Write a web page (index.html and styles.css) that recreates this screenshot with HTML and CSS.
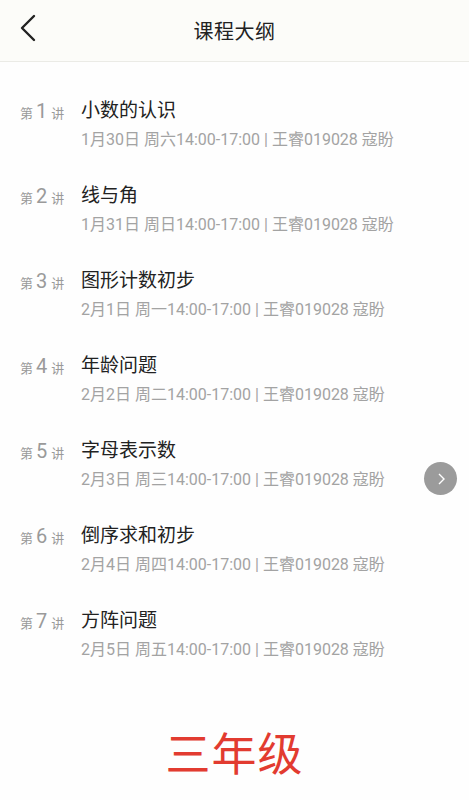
FILE: index.html
```html
<!DOCTYPE html>
<html lang="zh">
<head>
<meta charset="utf-8">
<link rel="stylesheet" href="styles.css">
</head>
<body>
<div class="page">
  <header class="header">
    <svg class="back" width="20" height="28" viewBox="0 0 20 28"><path d="M15 2 L3 14 L15 26" fill="none" stroke="#222" stroke-width="2.4" stroke-linecap="round" stroke-linejoin="round"/></svg>
    <div class="title">课程大纲</div>
  </header>
  <main class="list">
    <div class="item">
      <div class="num"><span class="s">第</span><span class="n">1</span><span class="s">讲</span></div>
      <div class="info"><div class="name">小数的认识</div><div class="meta">1月30日 周六14:00-17:00 | 王睿019028 寇盼</div></div>
    </div>
    <div class="item">
      <div class="num"><span class="s">第</span><span class="n">2</span><span class="s">讲</span></div>
      <div class="info"><div class="name">线与角</div><div class="meta">1月31日 周日14:00-17:00 | 王睿019028 寇盼</div></div>
    </div>
    <div class="item">
      <div class="num"><span class="s">第</span><span class="n">3</span><span class="s">讲</span></div>
      <div class="info"><div class="name">图形计数初步</div><div class="meta">2月1日 周一14:00-17:00 | 王睿019028 寇盼</div></div>
    </div>
    <div class="item">
      <div class="num"><span class="s">第</span><span class="n">4</span><span class="s">讲</span></div>
      <div class="info"><div class="name">年龄问题</div><div class="meta">2月2日 周二14:00-17:00 | 王睿019028 寇盼</div></div>
    </div>
    <div class="item">
      <div class="num"><span class="s">第</span><span class="n">5</span><span class="s">讲</span></div>
      <div class="info"><div class="name">字母表示数</div><div class="meta">2月3日 周三14:00-17:00 | 王睿019028 寇盼</div></div>
      <div class="next"><svg width="12" height="14" viewBox="0 0 12 14"><path d="M4 2 L9 7 L4 12" fill="none" stroke="#fff" stroke-width="1.4"/></svg></div>
    </div>
    <div class="item">
      <div class="num"><span class="s">第</span><span class="n">6</span><span class="s">讲</span></div>
      <div class="info"><div class="name">倒序求和初步</div><div class="meta">2月4日 周四14:00-17:00 | 王睿019028 寇盼</div></div>
    </div>
    <div class="item">
      <div class="num"><span class="s">第</span><span class="n">7</span><span class="s">讲</span></div>
      <div class="info"><div class="name">方阵问题</div><div class="meta">2月5日 周五14:00-17:00 | 王睿019028 寇盼</div></div>
    </div>
  </main>
  <div class="grade">三年级</div>
</div>
</body>
</html>
```
FILE: styles.css
```css
html, body { margin: 0; padding: 0; }
body {
  background: #fefefe;
  font-family: Roboto, "Noto Sans CJK SC", sans-serif;
  width: 469px;
  height: 800px;
  overflow: hidden;
}
.page { position: relative; width: 469px; height: 800px; }
.header {
  height: 61px;
  background: #fcfcf9;
  border-bottom: 1px solid #ebebe6;
  display: flex;
  align-items: center;
  justify-content: center;
  position: relative;
}
.back { position: absolute; left: 19px; top: 14px; }
.title { font-size: 20px; color: #222; letter-spacing: 0.5px; }
.list { padding-top: 32px; }
.item {
  display: flex;
  align-items: flex-start;
  height: 85px;
  position: relative;
}
.num {
  width: 81px;
  padding-left: 20px;
  box-sizing: border-box;
  color: #9a9a9a;
  display: flex;
  align-items: baseline;
  height: 34px;
  line-height: 34px;
}
.num .s { font-size: 13px; }
.num .n { font-size: 20px; margin: 0 4px 0 3px; }
.info { display: flex; flex-direction: column; }
.name { font-size: 19px; color: #222; line-height: 34px; height: 34px; }
.meta { font-size: 16px; color: #a3a3a3; line-height: 20px; margin-top: 2px; }
.next {
  position: absolute;
  left: 424px;
  top: 28px;
  width: 33px;
  height: 33px;
  border-radius: 50%;
  background: #9b9b9b;
  display: flex;
  align-items: center;
  justify-content: center;
}
.grade {
  text-align: center;
  color: #e23b30;
  font-size: 45px;
  font-weight: 400;
  margin-top: 42px;
  line-height: 50px;
  letter-spacing: 1px;
}
```
